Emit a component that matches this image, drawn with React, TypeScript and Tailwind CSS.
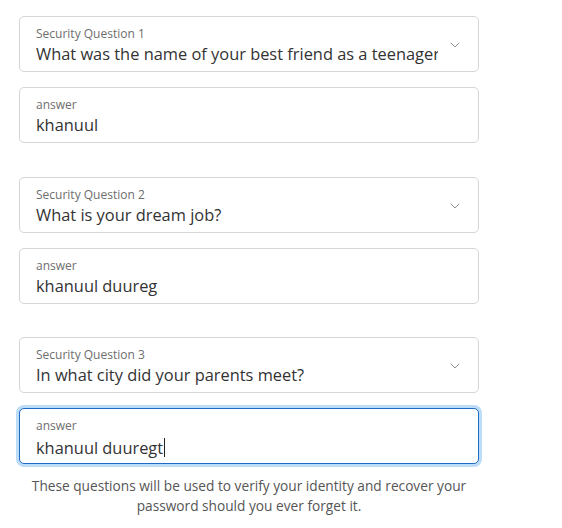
import { ChevronDown } from "lucide-react";

const groups = [
  {
    question: "Security Question 1",
    value: "What was the name of your best friend as a teenager",
    answer: "khanuul",
  },
  {
    question: "Security Question 2",
    value: "What is your dream job?",
    answer: "khanuul duureg",
  },
  {
    question: "Security Question 3",
    value: "In what city did your parents meet?",
    answer: "khanuul duuregt",
    focused: true,
  },
];

function Field({
  label,
  value,
  select,
  focused,
}: {
  label: string;
  value: string;
  select?: boolean;
  focused?: boolean;
}) {
  return (
    <div
      className={
        focused
          ? "relative h-[56px] rounded-[5px] border border-[#1d6bc4] bg-white shadow-[0_0_0_3px_#bcdcf8]"
          : "relative h-[56px] rounded-[5px] border border-[#d6d6d6] bg-white"
      }
    >
      <div className="absolute left-[16px] top-[9px] text-[12px] leading-[16px] text-[#6e6e6e]">
        {label}
      </div>
      <div className="absolute left-[16px] right-[40px] top-[26px] overflow-hidden whitespace-nowrap text-[16.4px] leading-[22px] text-[#333]">
        {value}
        {focused && <span className="ml-px inline-block h-[19px] w-px translate-y-[3px] bg-[#222]" />}
      </div>
      {select && (
        <ChevronDown
          className="absolute right-[15px] top-[20px] text-[#888]"
          size={16}
          strokeWidth={1.4}
        />
      )}
    </div>
  );
}

export default function App() {
  return (
    <div className="h-[528px] w-[562px] bg-white pl-[19px] pt-[16px] font-['Open_Sans',sans-serif]">
      <div className="flex w-[460px] flex-col">
        {groups.map((g, i) => (
          <div key={i} className={i > 0 ? "mt-[33.5px] flex flex-col gap-[15px]" : "flex flex-col gap-[15px]"}>
            <Field label={g.question} value={g.value} select />
            <Field label="answer" value={g.answer} focused={g.focused} />
          </div>
        ))}
        <p className="mt-[12px] px-[6px] text-center text-[13.7px] leading-[20px] text-[#555]">
          These questions will be used to verify your identity and recover your password should you ever forget it.
        </p>
      </div>
    </div>
  );
}
